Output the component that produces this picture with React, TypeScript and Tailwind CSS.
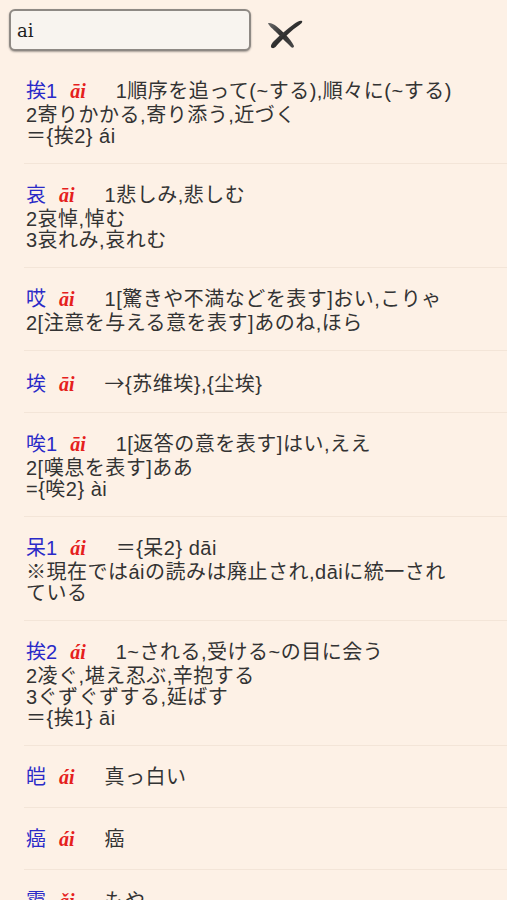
import React from "react";

type Entry = {
  word: string;
  pinyin: string;
  head: string;
  lines: string[];
};

const entries: Entry[] = [
  { word: "挨1", pinyin: "āi", head: "1順序を追って(~する),順々に(~する)", lines: ["2寄りかかる,寄り添う,近づく", "＝{挨2} ái"] },
  { word: "哀", pinyin: "āi", head: "1悲しみ,悲しむ", lines: ["2哀悼,悼む", "3哀れみ,哀れむ"] },
  { word: "哎", pinyin: "āi", head: "1[驚きや不満などを表す]おい,こりゃ", lines: ["2[注意を与える意を表す]あのね,ほら"] },
  { word: "埃", pinyin: "āi", head: "→{苏维埃},{尘埃}", lines: [] },
  { word: "唉1", pinyin: "āi", head: "1[返答の意を表す]はい,ええ", lines: ["2[嘆息を表す]ああ", "={唉2} ài"] },
  { word: "呆1", pinyin: "ái", head: "＝{呆2} dāi", lines: ["※現在ではáiの読みは廃止され,dāiに統一されている"] },
  { word: "挨2", pinyin: "ái", head: "1~される,受ける~の目に会う", lines: ["2凌ぐ,堪え忍ぶ,辛抱する", "3ぐずぐずする,延ばす", "＝{挨1} āi"] },
  { word: "皑", pinyin: "ái", head: "真っ白い", lines: [] },
  { word: "癌", pinyin: "ái", head: "癌", lines: [] },
  { word: "霭", pinyin: "ǎi", head: "もや", lines: [] },
];

const BrushX: React.FC = () => (
  <svg width="40" height="34" viewBox="0 0 40 34">
    <defs>
      <linearGradient id="ink" x1="0" y1="0" x2="1" y2="1">
        <stop offset="0" stopColor="#6a6a6a" />
        <stop offset="0.5" stopColor="#2e2e2e" />
        <stop offset="1" stopColor="#4a4a4a" />
      </linearGradient>
    </defs>
    <path
      d="M3,5 C8,4 14,10 20,16 C24,20 27,24 29,28 C29,30 27,30 26,29 C22,25 17,20 12,15 C8,11 4,8 3,5 Z"
      fill="url(#ink)"
    />
    <path
      d="M37,3 C38,4 36,6 33,8 C27,12 21,18 15,24 C12,27 10,31 7,30 C5,29 6,26 9,23 C15,17 22,11 29,6 C32,4 35,2 37,3 Z"
      fill="url(#ink)"
    />
  </svg>
);

// the arrow glyph in Liberation Sans is tiny, so draw it from the CJK font
const Definition: React.FC<{ text: string }> = ({ text }) => {
  if (!text.startsWith("→")) return <>{text}</>;
  return (
    <>
      <span className="font-['Noto_Sans_CJK_JP',sans-serif]">→</span>
      {text.slice(1)}
    </>
  );
};

const App: React.FC = () => {
  return (
    <div className="min-h-screen bg-[#fdf1e6] font-['Liberation_Sans','Noto_Sans_CJK_JP',sans-serif] text-[#333] overflow-hidden">
      {/* Search bar */}
      <div className="flex items-start pl-[9px] pt-[9px] pb-[8px]">
        <div className="w-[242px] h-[42px] rounded-md border-2 border-[#8e8984] bg-[#f8f4ef] shadow-[0_1px_2px_rgba(0,0,0,0.35)] flex items-center pl-[6px]">
          <span className="font-['DejaVu_Serif',serif] text-[18px] text-[#1e1e1e]">ai</span>
        </div>
        <div className="ml-[14px] mt-[9px]">
          <BrushX />
        </div>
      </div>

      {/* Results */}
      <div>
        {entries.map((e, i) => (
          <div key={i} className="ml-6 border-b border-[#f3e5d8] pl-0.5 pr-[52px] pt-[18px] pb-[16px] text-[20px]">
            <div className="h-[27px] leading-[27px] whitespace-nowrap">
              <span className="text-[#2a2ac8]">{e.word}</span>
              <span className="ml-[13px] font-['Liberation_Serif',serif] italic font-bold text-[#e5201c]">{e.pinyin}</span>
              <span className="ml-[30px] tracking-[0.5px]">
                <Definition text={e.head} />
              </span>
            </div>
            {e.lines.map((l, j) => (
              <div key={j} className="leading-[21px] tracking-[0.5px]">
                {l}
              </div>
            ))}
          </div>
        ))}
      </div>
    </div>
  );
};

export default App;
